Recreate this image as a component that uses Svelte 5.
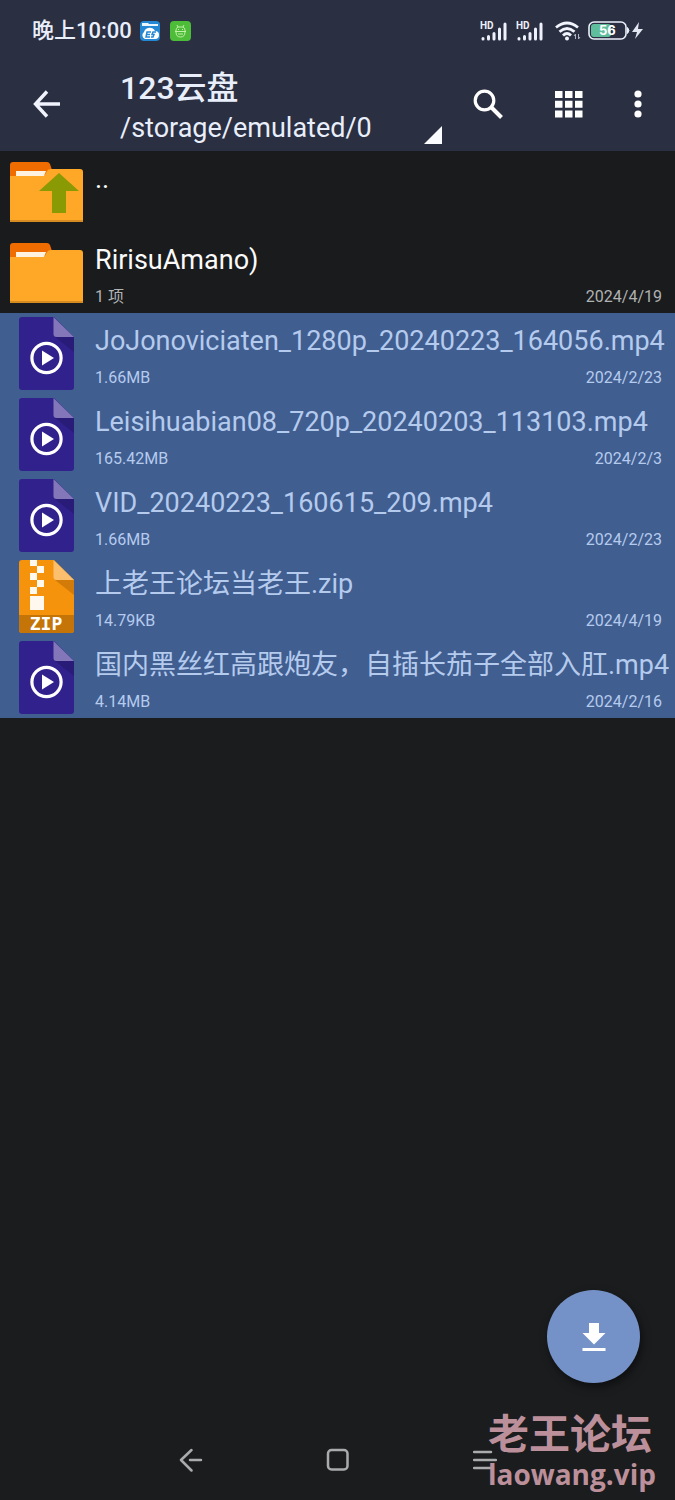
<script lang="ts">
	interface Entry {
		id: number;
		kind: 'up' | 'folder' | 'video' | 'zip';
		name: string;
		info?: string;
		date?: string;
	}

	const entries: Entry[] = [
		{ id: 1, kind: 'up', name: '..' },
		{ id: 2, kind: 'folder', name: 'RirisuAmano)', info: '1 项', date: '2024/4/19' },
		{ id: 3, kind: 'video', name: 'JoJonoviciaten_1280p_20240223_164056.mp4', info: '1.66MB', date: '2024/2/23' },
		{ id: 4, kind: 'video', name: 'Leisihuabian08_720p_20240203_113103.mp4', info: '165.42MB', date: '2024/2/3' },
		{ id: 5, kind: 'video', name: 'VID_20240223_160615_209.mp4', info: '1.66MB', date: '2024/2/23' },
		{ id: 6, kind: 'zip', name: '上老王论坛当老王.zip', info: '14.79KB', date: '2024/4/19' },
		{ id: 7, kind: 'video', name: '国内黑丝红高跟炮友，自插长茄子全部入肛.mp4', info: '4.14MB', date: '2024/2/16' }
	];

	let selected = $state<number[]>([3, 4, 5, 6, 7]);

	function toggle(id: number) {
		selected = selected.includes(id) ? selected.filter((s) => s !== id) : [...selected, id];
	}
</script>

<svelte:head>
	<title>123云盘</title>
</svelte:head>

{#snippet signal()}
	<svg class="signal" width="27" height="20" viewBox="0 0 27 20">
		<text x="0" y="8">HD</text>
		<g stroke="#edf1fb" stroke-width="3" stroke-linecap="round">
			<path d="M3 17.500v.5M8.500 15.500v2.500M14 12.500v5.500M19.500 8v10M25 3v15" />
		</g>
	</svg>
{/snippet}

<div class="screen">
	<header class="header">
		<div class="status">
			<span class="clock">晚上10:00</span>
			<svg class="app-icon" width="20" height="20" viewBox="0 0 20 20">
				<rect width="20" height="20" rx="4" fill="#2387d3" />
				<path d="M2 2h6l1 1h9v2H2z" fill="#e9f6ff" />
				<path d="M5 18a4 4 0 0 1-1-7 6 6 0 0 1 11-1 4 4 0 0 1 0 8z" fill="#fff" />
				<path d="M11 11H7l-1 5h4M7 13.500h3M16 11h-3l-1 2.500h2l-1 2.500h-2" fill="none" stroke="#2387d3" stroke-width="1.500" />
			</svg>
			<svg class="app-icon second" width="21" height="20" viewBox="0 0 21 20">
				<rect width="21" height="20" rx="4" fill="#4dbc38" />
				<g fill="none" stroke="#c3f0a8" stroke-width="1">
					<path d="M6 10.500V9q0-2 2-3l-1-2M15 10.500V9q0-2-2-3l1-2M8 6h5M5 10.500h11M6 11q0 5 4.500 5t4.500-5M8 13h5M8 8.500h1M12 8.500h1" />
				</g>
			</svg>
			<span class="spacer"></span>
			{@render signal()}
			{@render signal()}
			<svg class="wifi" width="26" height="20" viewBox="0 0 26 20">
				<g fill="none" stroke="#f1f4fc" stroke-width="2.800">
					<path d="M1 6.500q11-9 22 0M4.500 10.700q7.500-6.500 15 0M8 14.500q4-4 8 0" />
				</g>
				<circle cx="12" cy="17.500" r="2" fill="#f1f4fc" />
				<path d="M20.500 18v-5l-1.500 2M23.500 13v5l1.500-2" fill="none" stroke="#aeb4c6" stroke-width="1" />
			</svg>
			<svg class="battery" width="56" height="20" viewBox="0 0 56 20">
				<rect x="3" y="3" width="20" height="13" rx="3" fill="#5fbf9c" />
				<rect x="1" y="1" width="37" height="17" rx="5" fill="none" stroke="#edf1fb" stroke-width="1.600" />
				<path d="M39.500 6.500q3 3 0 6z" fill="#edf1fb" stroke="#edf1fb" />
				<text x="11" y="14">56</text>
				<path d="M51 1l-7 10h5l-2 7 8-10h-5z" fill="#e2e6f2" />
			</svg>
		</div>

		<div class="toolbar">
			<button class="icon-btn" aria-label="返回">
				<svg width="28" height="28" viewBox="0 0 28 28" fill="none" stroke="#f1f4fd" stroke-width="3.400">
					<path d="M28 14H4M15 1.500L3.500 14 15 26.500" />
				</svg>
			</button>
			<button class="location">
				<span class="titles">
					<span class="title">123云盘</span>
					<span class="path">/storage/emulated/0</span>
				</span>
				<svg width="18" height="18" viewBox="0 0 18 18"><path d="M18 0v18H0z" fill="#fafcff" /></svg>
			</button>
			<button class="icon-btn search" aria-label="搜索">
				<svg width="30" height="30" viewBox="0 0 30 30" fill="none" stroke="#fff">
					<circle cx="11.500" cy="11.500" r="9.300" stroke-width="3.200" />
					<path d="M18 18l10.500 10.500" stroke-width="4" />
				</svg>
			</button>
			<button class="icon-btn" aria-label="视图">
				<svg width="28" height="28" viewBox="0 0 28 28" fill="#fff">
					<path d="M0 1h7.500v7H0zM10 1h7.500v7H10zM20 1h7.500v7H20zM0 10.800h7.500v7H0zM10 10.800h7.500v7H10zM20 10.800h7.500v7H20zM0 20.600h7.500v7H0zM10 20.600h7.500v7H10zM20 20.600h7.500v7H20z" />
				</svg>
			</button>
			<button class="icon-btn more" aria-label="更多">
				<svg width="8" height="28" viewBox="0 0 8 28" fill="#fff">
					<circle cx="4" cy="4" r="3.600" />
					<circle cx="4" cy="14" r="3.600" />
					<circle cx="4" cy="24" r="3.600" />
				</svg>
			</button>
		</div>
	</header>

	<main>
		<ul class="files">
			{#each entries as entry (entry.id)}
				<li>
					<button
						class="file"
						class:selected={selected.includes(entry.id)}
						aria-pressed={selected.includes(entry.id)}
						onclick={() => toggle(entry.id)}
					>
						<span class="thumb">
							{#if entry.kind === 'up' || entry.kind === 'folder'}
								<svg width="73" height="60" viewBox="0 0 73 60">
									<path d="M0 14V3q0-3 3-3h34q2 0 3 2l4 12z" fill="#ef6c00" />
									<path d="M0 14h32q3 0 4-3l1-2q1-2 4-2h29q3 0 3 3v50H0z" fill="#ffa726" />
									<path d="M6 9h30l-2 5H6z" fill="#fff3e0" />
									<path d="M0 58h73v2H0z" fill="#d68c20" />
									{#if entry.kind === 'up'}
										<path d="M49 11l20 18H56v22H42V29H29z" fill="#8a9a05" />
									{/if}
								</svg>
							{:else if entry.kind === 'video'}
								<svg width="55" height="73" viewBox="0 0 55 73">
									<path d="M3 0h32l20 20v50q0 3-3 3H3q-3 0-3-3V3q0-3 3-3z" fill="#31218c" />
									<path d="M36 20h19v15z" fill="#291b78" />
									<path d="M34.500 0L55 20H37.500q-3 0-3-3z" fill="#8377ba" />
									<circle cx="27.500" cy="41" r="14.600" fill="none" stroke="#fff" stroke-width="3.200" />
									<path d="M23 33.500v15L35 41z" fill="#fff" />
								</svg>
							{:else}
								<svg class="zip" width="55" height="73" viewBox="0 0 55 73">
									<path d="M3 0h32l20 20v50q0 3-3 3H3q-3 0-3-3V3q0-3 3-3z" fill="#f6930c" />
									<path d="M0 55h55v15q0 3-3 3H3q-3 0-3-3z" fill="#c57408" />
									<path d="M36 20h19v15z" fill="#d37b08" />
									<path d="M34.500 0L55 20H37.500q-3 0-3-3z" fill="#fbbf6e" />
									<path d="M11 0h7v6h-7zM18 6h7v7h-7zM11 13h7v7h-7zM18 20h7v7h-7zM11 27h7v7h-7zM11 36h14v14H11z" fill="#fff8ee" />
									<text x="27" y="70">ZIP</text>
								</svg>
							{/if}
						</span>
						<span class="details">
							<span class="name">{entry.name}</span>
							{#if entry.info}
								<span class="meta">
									<span>{entry.info}</span>
									<span>{entry.date}</span>
								</span>
							{/if}
						</span>
					</button>
				</li>
			{/each}
		</ul>
	</main>

	<button class="fab" aria-label="下载">
		<svg width="24" height="28" viewBox="0 0 24 28" fill="#fff">
			<path d="M7 0h10v10h6.500L12 21.500.500 10H7zM.500 25h23v3H.500z" />
		</svg>
	</button>

	<nav class="system-nav">
		<button aria-label="返回">
			<svg width="24" height="24" viewBox="0 0 24 24"><path d="M12.500 2L2 12l10.500 10.500M11 12h11" /></svg>
		</button>
		<button aria-label="主页">
			<svg width="24" height="24" viewBox="0 0 24 24"><rect x="2" y="2" width="19.500" height="19.500" rx="3.500" /></svg>
		</button>
		<button aria-label="菜单">
			<svg width="24" height="24" viewBox="0 0 24 24"><path d="M1 4h17M1 12h22M1 20h17" /></svg>
		</button>
	</nav>

	<div class="watermark">
		<span class="watermark-name">老王论坛</span>
		<span class="watermark-url">laowang.vip</span>
	</div>
</div>

<style>
	:global(body) {
		background: #1b1c1e;
	}

	.screen {
		min-height: 100vh;
		display: flex;
		flex-direction: column;
		position: relative;
		background: #1b1c1e;
		color: #fff;
		font-family: Roboto, 'Noto Sans CJK SC', sans-serif;
	}

	button {
		border: none;
		background: none;
		padding: 0;
		color: inherit;
		font: inherit;
		cursor: pointer;
	}

	svg {
		display: block;
		flex-shrink: 0;
	}

	/* Header */
	.header {
		background: #2a2f42;
		color: #e9eefb;
	}

	.status {
		display: flex;
		align-items: center;
		height: 62px;
		padding: 0 31px 0 32px;
	}

	.clock {
		font-size: 22px;
		font-weight: 500;
		line-height: 30px;
	}

	.app-icon {
		margin-left: 8px;
	}

	.app-icon.second {
		margin-left: 10px;
	}

	.spacer {
		flex: 1;
	}

	.signal {
		margin-right: 9px;
	}

	.signal text {
		font: bold 10px Roboto, sans-serif;
		fill: #edf1fb;
	}

	.wifi {
		margin: 0 7px 0 3px;
	}

	.battery text {
		font: bold 13px Inter, sans-serif;
		fill: #fff;
	}

	.toolbar {
		display: flex;
		align-items: center;
		height: 84px;
		padding: 0 33px 5px 32px;
	}

	.icon-btn {
		display: flex;
		align-items: center;
		justify-content: center;
		height: 48px;
	}

	.location {
		flex: 1;
		display: flex;
		align-items: flex-end;
		justify-content: space-between;
		margin-left: 60px;
		text-align: left;
	}

	.titles {
		display: flex;
		flex-direction: column;
		padding-top: 8px;
	}

	.title {
		font-size: 32px;
		font-weight: 500;
		line-height: 40px;
	}

	.path {
		font-size: 27px;
		line-height: 40px;
	}

	.location svg {
		margin-bottom: 4px;
	}

	.search {
		margin: 0 52px 0 31px;
	}

	.more {
		margin-left: 51px;
	}

	/* File list */
	.files {
		list-style: none;
		margin: 0;
		padding: 0;
		background: #191b1c;
	}

	.file {
		display: flex;
		width: 100%;
		height: 81px;
		padding-right: 13px;
		text-align: left;
		color: #fafafa;
	}

	.file.selected {
		background: #415e90;
		color: #b5cbee;
	}

	.thumb {
		display: flex;
		align-items: center;
		justify-content: center;
		width: 93px;
		height: 81px;
		flex-shrink: 0;
	}

	.zip text {
		font: bold 18px 'DejaVu Sans Mono', monospace;
		fill: #fff;
		text-anchor: middle;
	}

	.details {
		display: flex;
		flex-direction: column;
		flex: 1;
		min-width: 0;
		margin-left: 2px;
		padding-top: 10px;
	}

	.name {
		font-size: 27px;
		line-height: 36px;
		white-space: nowrap;
	}

	.meta {
		display: flex;
		justify-content: space-between;
		margin-top: 8px;
		font-size: 16px;
		line-height: 22px;
		color: #b0b2b3;
	}

	.selected .meta {
		color: #b5cbee;
	}

	/* Floating download button */
	.fab {
		position: absolute;
		right: 35px;
		bottom: 117px;
		display: flex;
		align-items: center;
		justify-content: center;
		width: 93px;
		height: 93px;
		border-radius: 50%;
		background: #7592c8;
		box-shadow: 2px 4px 8px rgba(0, 0, 0, 0.5);
	}

	.system-nav {
		display: grid;
		grid-template-columns: repeat(3, 1fr);
		height: 80px;
		margin-top: auto;
		padding: 0 117px;
	}

	.system-nav button {
		display: flex;
		align-items: center;
		justify-content: center;
	}

	.system-nav svg {
		fill: none;
		stroke: #aaabad;
		stroke-width: 2.500;
		stroke-linecap: round;
		stroke-linejoin: round;
	}

	.watermark {
		position: absolute;
		right: 19px;
		bottom: 7px;
		display: flex;
		flex-direction: column;
		align-items: flex-start;
		color: #bc909b;
		font-weight: 700;
		pointer-events: none;
	}

	.watermark-name {
		font-family: 'Liberation Sans', 'Noto Sans CJK SC', sans-serif;
		font-size: 41px;
		line-height: 40px;
	}

	.watermark-url {
		font-family: 'Open Sans', sans-serif;
		font-size: 28px;
		line-height: 38px;
	}
</style>
